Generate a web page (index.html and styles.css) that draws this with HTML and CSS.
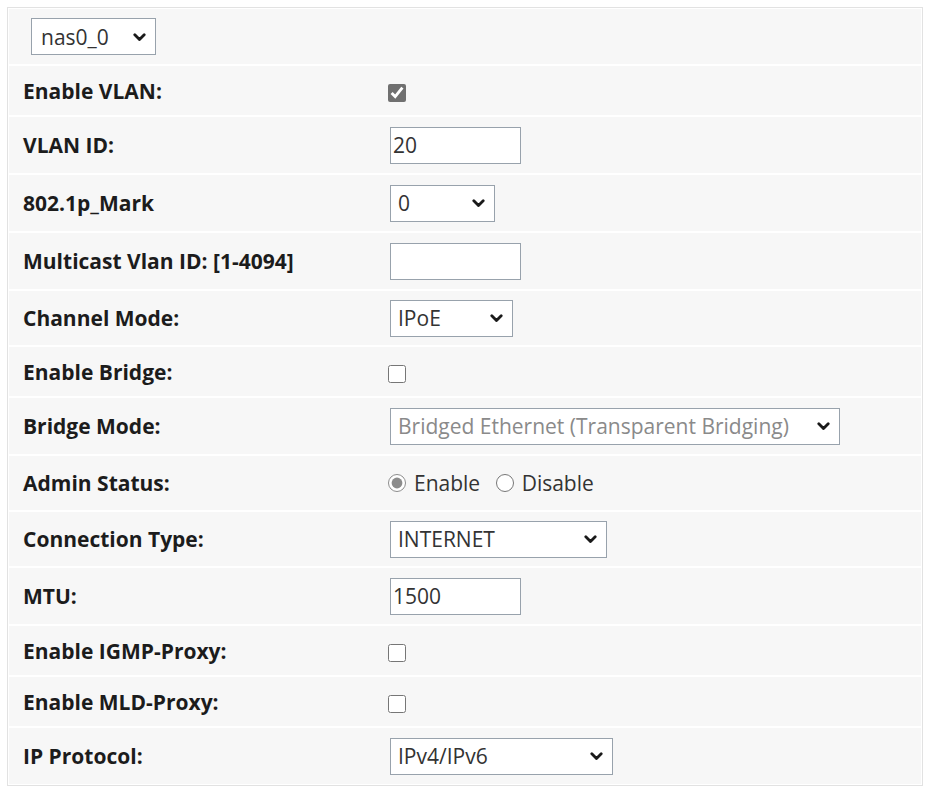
FILE: index.html
```html
<!DOCTYPE html>
<html lang="en">
<head>
  <meta charset="UTF-8">
  <meta name="viewport" content="width=device-width, initial-scale=1.0">
  <title>WAN Configuration</title>
  <link rel="stylesheet" href="styles.css">
</head>
<body>

  <div class="frame">
    <table class="cfg">
      <tr class="row-top">
        <td colspan="2">
          <span class="sel w-nas">
            <select><option>nas0_0</option></select>
            <svg viewBox="0 0 13 9"><path d="M1.8 1.8 L6.5 6.6 L11.2 1.8"/></svg>
          </span>
        </td>
      </tr>
      <tr class="row-chk">
        <th>Enable VLAN:</th>
        <td><input type="checkbox" class="chk" checked></td>
      </tr>
      <tr>
        <th>VLAN ID:</th>
        <td><input type="text" class="txt" value="20"></td>
      </tr>
      <tr>
        <th>802.1p_Mark</th>
        <td>
          <span class="sel w-mark">
            <select><option>0</option></select>
            <svg viewBox="0 0 13 9"><path d="M1.8 1.8 L6.5 6.6 L11.2 1.8"/></svg>
          </span>
        </td>
      </tr>
      <tr>
        <th>Multicast Vlan ID: [1-4094]</th>
        <td><input type="text" class="txt" value=""></td>
      </tr>
      <tr class="row-mid">
        <th>Channel Mode:</th>
        <td>
          <span class="sel w-chan">
            <select><option>IPoE</option></select>
            <svg viewBox="0 0 13 9"><path d="M1.8 1.8 L6.5 6.6 L11.2 1.8"/></svg>
          </span>
        </td>
      </tr>
      <tr class="row-chk">
        <th>Enable Bridge:</th>
        <td><input type="checkbox" class="chk"></td>
      </tr>
      <tr>
        <th>Bridge Mode:</th>
        <td>
          <span class="sel w-bridge">
            <select disabled><option>Bridged Ethernet (Transparent Bridging)</option></select>
            <svg viewBox="0 0 13 9"><path d="M1.8 1.8 L6.5 6.6 L11.2 1.8"/></svg>
          </span>
        </td>
      </tr>
      <tr class="row-mid">
        <th>Admin Status:</th>
        <td>
          <label class="opt"><input type="radio" name="admin" checked>Enable</label>
          <label class="opt"><input type="radio" name="admin">Disable</label>
        </td>
      </tr>
      <tr class="row-mid">
        <th>Connection Type:</th>
        <td>
          <span class="sel w-conn">
            <select><option>INTERNET</option></select>
            <svg viewBox="0 0 13 9"><path d="M1.8 1.8 L6.5 6.6 L11.2 1.8"/></svg>
          </span>
        </td>
      </tr>
      <tr>
        <th>MTU:</th>
        <td><input type="text" class="txt" value="1500"></td>
      </tr>
      <tr class="row-chk">
        <th>Enable IGMP-Proxy:</th>
        <td><input type="checkbox" class="chk"></td>
      </tr>
      <tr class="row-chk">
        <th>Enable MLD-Proxy:</th>
        <td><input type="checkbox" class="chk"></td>
      </tr>
      <tr>
        <th>IP Protocol:</th>
        <td>
          <span class="sel w-ip">
            <select><option>IPv4/IPv6</option></select>
            <svg viewBox="0 0 13 9"><path d="M1.8 1.8 L6.5 6.6 L11.2 1.8"/></svg>
          </span>
        </td>
      </tr>
    </table>
  </div>

</body>
</html>
```

FILE: styles.css
```css
body {
  font-family: "Open Sans", "Noto Sans", sans-serif;
  background: #fff;
  margin: 7px 5px 0 7px;
  color: #222;
}

.frame {
  border: 1px solid #e2e2e2;
  box-shadow: 2px 2px 4px rgba(0,0,0,0.4);
  padding: 0 1px;
}

.cfg {
  width: 100%;
  border-collapse: separate;
  border-spacing: 0 2px;
  margin: -1px 0;
}

.cfg th,
.cfg td {
  background: #f7f7f7;
  height: 56px;
  padding: 0;
  vertical-align: middle;
}

.cfg th {
  width: 364px;
  padding-left: 14px;
  text-align: left;
  font-size: 21px;
  font-weight: bold;
  color: #1c1c1c;
  white-space: nowrap;
}

.cfg td {
  padding-left: 1px;
  font-size: 21px;
  color: #333;
}

.row-top td {
  height: 55px;
  padding-left: 22px;
}

.row-chk th,
.row-chk td {
  height: 49px;
}

.row-mid th,
.row-mid td {
  height: 54px;
}

/* text fields */
.txt {
  box-sizing: border-box;
  width: 131px;
  height: 37px;
  margin: 0 0 0 2px;
  padding: 0 2px;
  border: 1px solid #98a2ac;
  background: #fff;
  font: 21px "Open Sans", sans-serif;
  color: #333;
  vertical-align: middle;
}

/* dropdowns with a drawn chevron */
.sel {
  position: relative;
  display: inline-block;
  margin-left: 2px;
  vertical-align: middle;
}

.sel select {
  appearance: none;
  -webkit-appearance: none;
  box-sizing: border-box;
  width: 100%;
  height: 37px;
  padding: 0 30px 0 7px;
  border: 1px solid #98a2ac;
  border-radius: 0;
  background: #fff;
  font: 21px "Open Sans", sans-serif;
  color: #333;
  display: block;
}

.sel select:disabled {
  color: #8a8a8a;
  opacity: 1;
}

.sel svg {
  position: absolute;
  right: 10px;
  top: 50%;
  width: 13px;
  height: 9px;
  margin-top: -4px;
  pointer-events: none;
}

.sel svg path {
  fill: none;
  stroke: #1a1a1a;
  stroke-width: 2.8;
  stroke-linecap: round;
  stroke-linejoin: round;
}

.row-top .sel { margin-left: 0; }
.row-top select { padding-left: 9px; }

.w-nas { width: 125px; }
.w-mark { width: 105px; }
.w-chan { width: 123px; }
.w-bridge { width: 450px; }
.w-conn { width: 217px; }
.w-ip { width: 223px; }

/* checkboxes and radios */
.chk {
  width: 18px;
  height: 18px;
  margin: 0;
  accent-color: #707070;
  vertical-align: middle;
}

.opt {
  display: inline-flex;
  align-items: center;
  margin-right: 10px;
  color: #333;
}

.opt input {
  width: 18px;
  height: 18px;
  margin: 0 8px 0 0;
  accent-color: #8c8c8c;
}
```
